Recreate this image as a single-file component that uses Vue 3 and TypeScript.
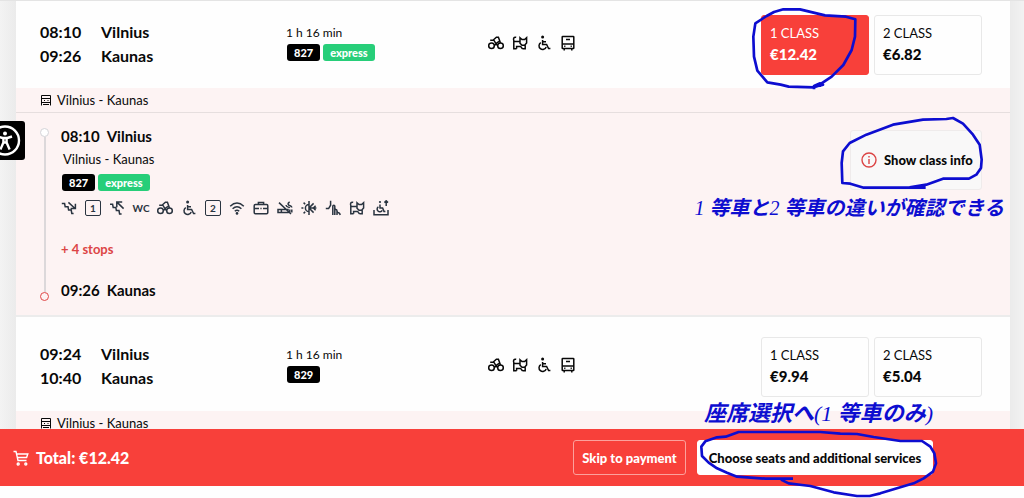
<script setup lang="ts">
interface Fare {
  label: string
  price: string
  selected?: boolean
}
interface Trip {
  depart: string
  arrive: string
  from: string
  to: string
  duration: string
  train: string
  express: boolean
  fares: Fare[]
}
interface Amenity {
  name: string
  text?: string
}

const trips: Trip[] = [
  {
    depart: '08:10',
    arrive: '09:26',
    from: 'Vilnius',
    to: 'Kaunas',
    duration: '1 h 16 min',
    train: '827',
    express: true,
    fares: [
      { label: '1 CLASS', price: '€12.42', selected: true },
      { label: '2 CLASS', price: '€6.82' },
    ],
  },
  {
    depart: '09:24',
    arrive: '10:40',
    from: 'Vilnius',
    to: 'Kaunas',
    duration: '1 h 16 min',
    train: '829',
    express: false,
    fares: [
      { label: '1 CLASS', price: '€9.94' },
      { label: '2 CLASS', price: '€5.04' },
    ],
  },
]

const summaryIcons = ['bike', 'pet', 'wheelchair', 'train']
const amenities: Amenity[] = [
  { name: 'stairs-down' },
  { name: 'boxed', text: '1' },
  { name: 'stairs-up' },
  { name: 'plain', text: 'WC' },
  { name: 'bike' },
  { name: 'wheelchair' },
  { name: 'boxed', text: '2' },
  { name: 'wifi' },
  { name: 'luggage' },
  { name: 'no-smoking' },
  { name: 'climate' },
  { name: 'seat' },
  { name: 'pet' },
  { name: 'lift' },
]
</script>

<template>
  <div class="page">
    <svg class="sprite" aria-hidden="true">
      <symbol id="bike" viewBox="0 0 16 16">
        <circle cx="3.5" cy="10.8" r="2.8" /><circle cx="12.5" cy="10.8" r="2.8" />
        <path d="M2.2 5.2H5.8L8 8.6 11 6.4M5 5.2 8.4 2.2H10.4L12.5 8M6.2 9.8H9.8M8 8.6V10.2" />
      </symbol>
      <symbol id="pet" viewBox="0 0 16 16">
        <path d="M4.2 2.2C1.4 1.8 1.2 4 1.8 5.6V13.8H4.6M1.8 6.4H8M8 2.8 10 4.6H12.6L14.6 2.8V8L12.6 10.2H10L8 8.2ZM13.2 10.2V13.8H10.4M4.6 13.8V11.4H8.6L10.4 13.8" />
      </symbol>
      <symbol id="wheelchair" viewBox="0 0 16 16">
        <circle class="solid" cx="6.6" cy="2" r="1.5" />
        <path d="M6.6 5V9.4H10.6L12.6 13.6H14.4M6.6 6.8H10M4.8 7.6A3.7 3.7 0 1 0 10.2 12" />
      </symbol>
      <symbol id="train" viewBox="0 0 16 16">
        <rect x="2.2" y="1.5" width="11.6" height="12" rx="0.6" />
        <path d="M2.2 9H13.8M6 4.5H10M4.2 11.3H5.4M10.6 11.3H11.8M4.2 13.5V15.4M11.8 13.5V15.4" />
      </symbol>
      <symbol id="route" viewBox="0 0 12 12">
        <path d="M1.5 11.5V1.5H10.5V11.5M1.5 4.5H10.5M1.5 8.5H10.5M4 6.5H5M7.5 6.5H8.5M3 10.5H9" />
      </symbol>
      <symbol id="stairs-down" viewBox="0 0 16 16">
        <path d="M.8 3.6H3.6L4.2 6.8H7L7.6 10H10.2L10.8 13.4H12.6M7.4 2.4 13.8 8.2M14.4 3.8V8.6H9.6" />
      </symbol>
      <symbol id="stairs-up" viewBox="0 0 16 16">
        <path d="M1 4.2H3.6L4.2 7.4H6.8L7.4 10.6H10L10.6 14H12.6M14.6 8.6 8.2 2.4M7.8 7.2V2H13.2" />
      </symbol>
      <symbol id="wifi" viewBox="0 0 16 16">
        <path d="M1.2 6.2Q8-.2 14.8 6.2M3.6 8.8Q8 4.6 12.4 8.8M5.8 11.2Q8 9.2 10.2 11.2" />
        <circle class="solid" cx="8" cy="13.4" r="1.3" />
      </symbol>
      <symbol id="luggage" viewBox="0 0 16 16">
        <rect x="1.2" y="4.6" width="13.6" height="9.2" rx="1.2" />
        <path d="M5.4 4.6V2.4H10.6V4.6M1.2 8.6H6M10 8.6H14.8M7.4 8.6H8.6" />
      </symbol>
      <symbol id="no-smoking" viewBox="0 0 16 16">
        <path d="M1 9.4H11V12.6H1ZM4.4 9.4V12.6M12.8 9.4V12.6M14.8 9.4V12.6M2 2.6 14 14M14.8 7.6C14.8 5 12.6 6.4 11.4 4.8 10.6 3.6 11.4 2.2 12.8 2.2M12.8 7.8C12 6.6 9.4 7.8 9 5" />
      </symbol>
      <symbol id="climate" viewBox="0 0 16 16">
        <path d="M8 4.4A3.6 3.6 0 0 0 8 11.6M8 1V15M.4 8H2.4M2.6 2.6 4.2 4.2M2.6 13.4 4.2 11.8M8 8H15.4M8 8 12.6 3.4M8 8 12.6 12.6M14.6 5.8 12.4 8 14.6 10.2" />
      </symbol>
      <symbol id="seat" viewBox="0 0 16 16">
        <path d="M5.6.8V5.2L3.6 8.6H.8M7.8 15V6.2C7.8 4.8 9.8 4.8 9.8 6.2V15M9.8 9.6C11 9 12 9.8 12 11V15M12 12.6C13.4 12 14.8 13 15.2 15" />
      </symbol>
      <symbol id="lift" viewBox="0 0 16 16">
        <path d="M1 10V14.8H15V10M7 4.4V8H9.6L11 11.4H12.4M5.4 6.8A2.7 2.7 0 1 0 9.2 10.4M13.2 6V.8M11.4 2.6 13.2.8 15 2.6" />
        <circle class="solid" cx="7" cy="2" r="1.1" />
      </symbol>
    </svg>

    <main class="results">
      <template v-for="(trip, index) in trips" :key="trip.train">
        <section class="trip">
          <dl class="times">
            <dt>{{ trip.depart }}</dt><dd>{{ trip.from }}</dd>
            <dt>{{ trip.arrive }}</dt><dd>{{ trip.to }}</dd>
          </dl>
          <div class="summary">
            <span class="duration">{{ trip.duration }}</span>
            <div class="badges">
              <span class="badge">{{ trip.train }}</span>
              <span v-if="trip.express" class="badge express">express</span>
            </div>
          </div>
          <div class="icons features">
            <svg v-for="name in summaryIcons" :key="name" class="icon"><use :href="'#' + name" /></svg>
          </div>
          <div class="fares">
            <div v-for="fare in trip.fares" :key="fare.label" class="fare-slot">
              <button type="button" class="fare" :class="{ selected: fare.selected }">
                <span class="fare-label">{{ fare.label }}</span>
                <strong class="fare-price">{{ fare.price }}</strong>
              </button>
              <svg v-if="fare.selected" class="marker" width="108" height="60" viewBox="0 0 324 180" aria-hidden="true">
                <path d="M180 212 159 213 159 223M159 213 176 205 186 209 159 217 83 215 59 209 19 202-11 167-21 125-23 65-17 25 17 3 39-9 67-17 117-17 192 1 255 5 283 13 282 65 272 105 247 150 212 185 176 209" />
              </svg>
            </div>
          </div>
        </section>
        <div class="route">
          <svg class="icon small"><use href="#route" /></svg>
          <span>{{ trip.from }} - {{ trip.to }}</span>
        </div>

        <section v-if="index === 0" class="detail">
          <div class="timeline">
            <span class="dot" /><span class="rail" /><span class="dot end" />
          </div>
          <div class="journey">
            <h2 class="stop"><span>{{ trip.depart }}</span><span>{{ trip.from }}</span></h2>
            <p class="line">{{ trip.from }} - {{ trip.to }}</p>
            <div class="badges">
              <span class="badge">{{ trip.train }}</span>
              <span class="badge express">express</span>
            </div>
            <div class="icons amenities">
              <template v-for="(item, i) in amenities" :key="i">
                <span v-if="item.text" class="glyph" :class="item.name">{{ item.text }}</span>
                <svg v-else class="icon"><use :href="'#' + item.name" /></svg>
              </template>
            </div>
            <button type="button" class="stops">+ 4 stops</button>
            <h2 class="stop"><span>{{ trip.arrive }}</span><span>{{ trip.to }}</span></h2>
          </div>
          <div class="info-slot">
            <button type="button" class="info">
              <svg class="info-icon" viewBox="0 0 16 16" aria-hidden="true">
                <circle cx="8" cy="8" r="7" /><path d="M8 7V12M8 4V5.4" />
              </svg>
              Show class info
            </button>
            <svg class="marker" width="132" height="60" viewBox="0 0 396 180" aria-hidden="true">
              <path d="M227 173H41L1 161-23 159-25 99-21 64-1 39 49 14 129-16 219-31 289-33 309-36 339-19 369 14 389 44 395 89 393 114 379 134 357 146H279L229 164 179 172" />
            </svg>
            <span class="note note-info" lang="ja"><span class="digit">1</span> 等車と<span class="digit">2</span> 等車の違いが確認できる</span>
          </div>
        </section>
      </template>
    </main>

    <button type="button" class="accessibility" aria-label="Accessibility">
      <svg viewBox="0 0 25 39" aria-hidden="true">
        <circle cx="5" cy="19.5" r="14" />
        <circle class="head" cx="5" cy="12.4" r="2" />
        <path d="M-2 15.5 2.6 17H7.4L12 15.5M3.4 17V21.5L.4 28.5M6.6 17V21.5L9.6 28.5M3.4 21.5H6.6" />
      </svg>
    </button>

    <footer class="checkout">
      <div class="total">
        <svg class="cart" viewBox="0 0 16 16" aria-hidden="true">
          <path d="M.5 1.5H3L5 10.5H13.5M3.6 4H14.8L13.6 7.5H4.4" />
          <circle cx="5.2" cy="14" r="1" /><circle cx="12.8" cy="14" r="1" />
        </svg>
        <span>Total: €12.42</span>
      </div>
      <button type="button" class="action skip">Skip to payment</button>
      <div class="choose-slot">
        <button type="button" class="action choose">Choose seats and additional services</button>
        <svg class="marker" width="236" height="35" viewBox="0 0 708 105" aria-hidden="true">
          <path d="M288 116H206L120 110 90 98 60 85 35 68 15 48 13 20 25 4 60-8 86-10 125-24 165-24H370L430-19 480-18 530-9 610 3H675L700 20 712 40 717 70 708 95 680 115 650 130 600 145 550 160 518 168 480 168 410 157 340 138 315 135 275 130 252 119" />
        </svg>
        <span class="note note-choose" lang="ja">座席選択へ<span class="digit">(1</span> 等車のみ<span class="digit">)</span></span>
      </div>
    </footer>
  </div>
</template>

<style>
body {
  margin: 0;
}
</style>

<style scoped>
.page {
  position: relative;
  display: flex;
  flex-direction: column;
  height: 100vh;
  overflow: hidden;
  box-sizing: border-box;
  padding-bottom: 12px;
  background: #fefefe;
  color: #080808;
  font-family: Lato, "Liberation Sans", sans-serif;
  font-size: 13px;
}
.sprite {
  position: absolute;
  width: 0;
  height: 0;
}
.results {
  flex: 1;
  min-height: 0;
  overflow: hidden;
  padding: 0 14px 0 16px;
  border-top: 1px solid #e4e4e4;
  background: linear-gradient(90deg, #f3f3f3, #ebebeb 16px, #ebebeb calc(100% - 14px), #f2f2f2);
}
.trip {
  display: grid;
  grid-template-columns: 246px 202px 1fr auto;
  align-items: center;
  padding: 20px 28px 14px 24px;
  background: #fefefe;
}
.trip:first-child {
  padding-top: 14px;
  padding-bottom: 13px;
}
.times {
  display: grid;
  grid-template-columns: 61px 1fr;
  margin: 0;
  padding-bottom: 3px;
  font-size: 16px;
  font-weight: 700;
  line-height: 24px;
}
.times dd {
  margin: 0;
}
.summary {
  padding-bottom: 6px;
}
.duration {
  display: block;
  margin-bottom: 1px;
  font-size: 12px;
  line-height: 20px;
}
.badges {
  display: flex;
  gap: 3px;
  padding-left: 1px;
}
.badge {
  padding: 0 7px;
  border-radius: 3px;
  background: #000;
  color: #fff;
  font-size: 11px;
  font-weight: 900;
  line-height: 17px;
}
.badge.express {
  background: #27ce79;
}
.icons {
  display: flex;
  gap: 8px;
}
.features {
  padding-bottom: 4px;
}
.icon {
  width: 16px;
  height: 16px;
  fill: none;
  stroke: currentColor;
  stroke-width: 1.5;
}
.icon.small {
  width: 12px;
  height: 12px;
  stroke-width: 1;
}
.solid {
  fill: currentColor;
  stroke: none;
}
.glyph {
  box-sizing: border-box;
  display: flex;
  align-items: center;
  justify-content: center;
  width: 16px;
  height: 16px;
  font-size: 10px;
  font-weight: 700;
  line-height: 12px;
}
.glyph.boxed {
  border: 1px solid #2a3440;
  border-radius: 2px;
}
.fares {
  display: flex;
  gap: 5px;
}
.fare-slot,
.info-slot,
.choose-slot {
  position: relative;
}
button {
  font: inherit;
  color: inherit;
  cursor: pointer;
}
.fare {
  display: flex;
  flex-direction: column;
  justify-content: center;
  width: 108px;
  height: 60px;
  padding: 0 8px 2px;
  border: 1px solid #e8e8e8;
  border-radius: 3px;
  background: #fefefe;
  text-align: left;
}
.fare.selected {
  border-color: #f8403a;
  background: #f8403a;
  color: #fff;
}
.fare-label {
  line-height: 20px;
}
.fare-price {
  font-size: 15px;
  font-weight: 900;
  line-height: 22px;
}
.marker {
  position: absolute;
  top: 0;
  left: 0;
  z-index: 2;
  overflow: visible;
  fill: none;
  stroke: #0d0dd0;
  stroke-width: 8;
  stroke-linejoin: round;
  pointer-events: none;
}
.route {
  display: flex;
  align-items: center;
  gap: 5px;
  height: 24px;
  padding-left: 24px;
  background: #fdf3f3;
}
.detail {
  display: flex;
  align-items: flex-start;
  padding: 12px 28px 14px 24px;
  border-top: 1px solid #e6dede;
  border-bottom: 2px solid #ececec;
  background: #fdf3f3;
}
.timeline {
  display: flex;
  flex-direction: column;
  align-items: center;
  align-self: stretch;
  width: 9px;
  padding-top: 3px;
  margin-right: 12px;
}
.dot {
  box-sizing: border-box;
  width: 9px;
  height: 9px;
  border: 1px solid #d4d4d8;
  border-radius: 50%;
  background: #fff;
}
.dot.end {
  border-color: #e04848;
  background: #fdf3f3;
}
.rail {
  flex: 1;
  width: 2px;
  background: #dcd8da;
}
.journey {
  flex: 1;
}
.stop {
  display: flex;
  gap: 7px;
  margin: 0;
  font-size: 15px;
  font-weight: 700;
  line-height: 22px;
}
.line {
  margin: 2px 0 5px 2px;
  line-height: 20px;
}
.amenities {
  margin-top: 9px;
  color: #2a3440;
}
.stops {
  display: block;
  margin: 23px 0 20px;
  padding: 0;
  border: 0;
  background: none;
  color: #dc4545;
  font-weight: 700;
  line-height: 20px;
}
.info-slot {
  margin-top: 5px;
}
.info {
  display: flex;
  align-items: center;
  gap: 7px;
  width: 132px;
  height: 60px;
  padding: 0 0 0 10px;
  border: 1px solid #efebeb;
  border-radius: 3px;
  background: #f9f8f8;
  font-weight: 900;
  white-space: nowrap;
}
.info-icon {
  width: 16px;
  height: 16px;
  fill: none;
  stroke: #dc4545;
  stroke-width: 1.4;
}
.note {
  position: absolute;
  z-index: 3;
  color: #0d0dd0;
  font-family: "Liberation Serif", "Noto Sans CJK JP", serif;
  font-style: italic;
  font-weight: 700;
  line-height: 28px;
  white-space: nowrap;
}
.digit {
  font-weight: 400;
}
.note-info {
  right: -22px;
  bottom: -32px;
  font-size: 20px;
}
.note-choose {
  left: 7px;
  bottom: 47px;
  font-size: 22px;
}
.accessibility {
  position: absolute;
  top: 121px;
  left: 0;
  width: 25px;
  height: 39px;
  padding: 0;
  border: 0;
  border-radius: 0 3px 3px 0;
  background: #000;
}
.accessibility svg {
  display: block;
  fill: none;
  stroke: #fff;
  stroke-width: 2.4;
}
.accessibility .head {
  fill: #fff;
  stroke: none;
}
.checkout {
  position: relative;
  display: flex;
  align-items: center;
  height: 57px;
  padding: 0 91px 0 13px;
  background: #f8403a;
  color: #fff;
}
.total {
  display: flex;
  align-items: center;
  gap: 7px;
  margin-right: auto;
  font-size: 16px;
  font-weight: 900;
}
.cart {
  width: 16px;
  height: 16px;
  fill: none;
  stroke: #fff;
  stroke-width: 1.4;
}
.action {
  height: 35px;
  padding: 0 8px;
  border: 1px solid #fff;
  border-radius: 3px;
  font-weight: 900;
  white-space: nowrap;
}
.skip {
  width: 113px;
  margin-right: 11px;
  border-color: #fca19c;
  background: transparent;
}
.choose {
  display: block;
  width: 236px;
  background: #fff;
  color: #080808;
}
</style>
